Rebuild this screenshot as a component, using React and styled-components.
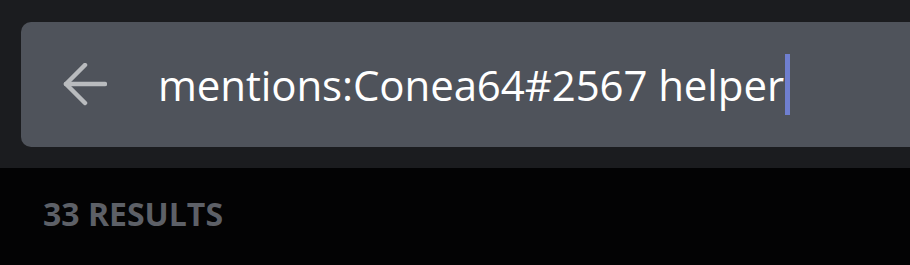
import React from 'react';
import styled, { createGlobalStyle } from 'styled-components';

const GlobalStyle = createGlobalStyle`
  html, body {
    margin: 0;
    padding: 0;
    background: #030304;
    font-family: 'Open Sans', sans-serif;
    overflow: hidden;
  }
`;

const Page = styled.div`
  width: 910px;
  height: 265px;
  display: flex;
  flex-direction: column;
  background: #030304;
`;

const Header = styled.div`
  background: #1b1c1f;
  height: 168px;
  box-sizing: border-box;
  padding: 22px 0 21px 21px;
  display: flex;
`;

const SearchBox = styled.div`
  flex: 1;
  display: flex;
  align-items: center;
  background: #4f535b;
  border-radius: 10px 0 0 10px;
  padding-left: 42px;
`;

const BackButton = styled.button`
  background: none;
  border: 0;
  padding: 0;
  width: 44px;
  height: 44px;
  display: flex;
  align-items: center;
  justify-content: center;
  color: #b9bbbe;
  cursor: pointer;
`;

const Query = styled.div`
  margin-left: 51px;
  display: flex;
  align-items: center;
  color: #ffffff;
  font-size: 42px;
  line-height: 1;
  letter-spacing: -0.1px;
  white-space: nowrap;
`;

const Caret = styled.span`
  display: inline-block;
  width: 5px;
  height: 61px;
  background: #6f7fd0;
  margin-left: 1px;
`;

const Results = styled.div`
  padding: 30px 0 0 43px;
  color: #5d6067;
  font-weight: 700;
  font-size: 32px;
  line-height: 1;
`;

function App() {
  return (
    <>
      <GlobalStyle />
      <Page>
        <Header>
          <SearchBox>
            <BackButton aria-label="Back">
              <svg width="44" height="44" viewBox="0 0 44 44" fill="none" stroke="currentColor" strokeWidth="4.5" strokeLinecap="round" strokeLinejoin="round">
                <path d="M42 21H3" />
                <path d="M22 2L3 21l19 19" />
              </svg>
            </BackButton>
            <Query>
              mentions:Conea64#2567 helper
              <Caret />
            </Query>
          </SearchBox>
        </Header>
        <Results>33 RESULTS</Results>
      </Page>
    </>
  );
}

export default App;
